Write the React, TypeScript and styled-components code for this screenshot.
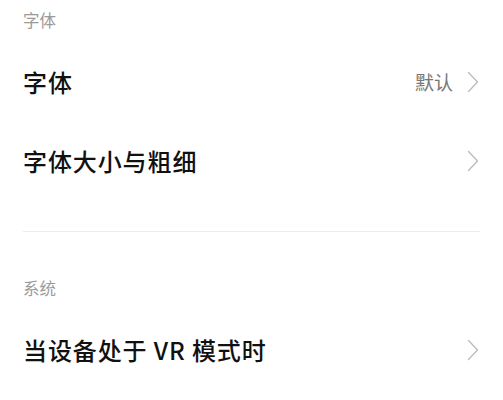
import React from 'react';
import styled, { createGlobalStyle } from 'styled-components';

const GlobalStyle = createGlobalStyle`
  html, body {
    margin: 0;
    padding: 0;
    background: #fff;
  }
  body {
    font-family: "Noto Sans CJK SC", "Noto Sans", sans-serif;
    -webkit-font-smoothing: antialiased;
  }
`;

const Page = styled.div`
  display: flex;
  flex-direction: column;
  background: #fff;
  width: 100%;
`;

const SectionLabel = styled.div`
  height: 42px;
  padding: 0 23px 2px;
  box-sizing: border-box;
  display: flex;
  align-items: center;
  font-size: 16.5px;
  color: #9a9a9a;
`;

const Row = styled.div`
  height: 79px;
  padding: 0 24px 0 23px;
  display: flex;
  align-items: center;
  justify-content: space-between;
`;

const RowTitle = styled.span`
  font-size: 24px;
  font-weight: 500;
  color: #111;
  letter-spacing: 0.9px;
`;

const RowRight = styled.div`
  display: flex;
  align-items: center;
  gap: 14px;
`;

const RowValue = styled.span`
  font-size: 19px;
  color: #777;
`;

const Divider = styled.div`
  height: 1px;
  background: #ececec;
  margin: 31px 23px 36px;
`;

const Chevron = () => (
  <svg width="12" height="22" viewBox="0 0 12 22">
    <polyline
      points="1.5,1.5 10.5,11 1.5,20.5"
      fill="none"
      stroke="#bdbdbd"
      strokeWidth="1.4"
      strokeLinecap="round"
      strokeLinejoin="round"
    />
  </svg>
);

const App: React.FC = () => {
  return (
    <>
      <GlobalStyle />
      <Page>
        <SectionLabel>字体</SectionLabel>
        <Row>
          <RowTitle>字体</RowTitle>
          <RowRight>
            <RowValue>默认</RowValue>
            <Chevron />
          </RowRight>
        </Row>
        <Row>
          <RowTitle>字体大小与粗细</RowTitle>
          <RowRight>
            <Chevron />
          </RowRight>
        </Row>
        <Divider />
        <SectionLabel>系统</SectionLabel>
        <Row>
          <RowTitle>当设备处于 VR 模式时</RowTitle>
          <RowRight>
            <Chevron />
          </RowRight>
        </Row>
      </Page>
    </>
  );
};

export default App;
